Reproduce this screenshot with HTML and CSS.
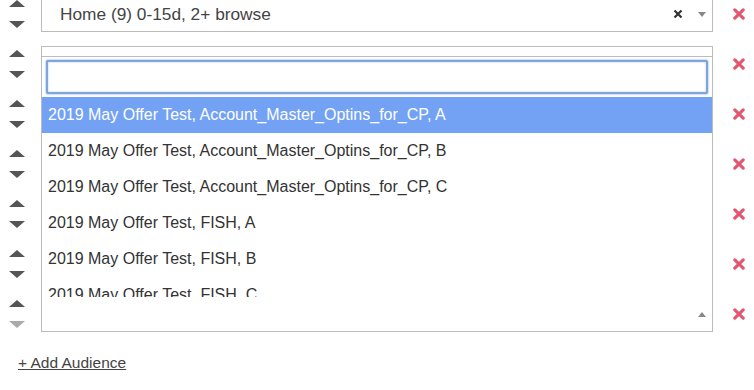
FILE: index.html
```html
<!DOCTYPE html>
<html lang="en">
  <head>
    <meta charset="UTF-8" />
    <title>Audiences</title>
    <link rel="stylesheet" href="styles.css">
  </head>
  <body>
    <div class="audience-list">
      <div class="audience-row">
        <div class="move-btns">
          <span class="arrow up"></span>
          <span class="arrow down"></span>
        </div>
        <div class="select-box">
          <span class="select-text">Home (9) 0-15d, 2+ browse</span>
          <span class="select-clear"><svg viewBox="0 0 10 10"><path d="M1.5 1.5 L8.5 8.5 M8.5 1.5 L1.5 8.5" /></svg></span>
          <span class="select-caret"></span>
        </div>
        <span class="remove-btn"><svg viewBox="0 0 10 10"><path d="M1.5 1.5 L8.5 8.5 M8.5 1.5 L1.5 8.5" /></svg></span>
      </div>

      <div class="audience-row">
        <div class="move-btns">
          <span class="arrow up"></span>
          <span class="arrow down"></span>
        </div>
        <div class="select-box"></div>
        <span class="remove-btn"><svg viewBox="0 0 10 10"><path d="M1.5 1.5 L8.5 8.5 M8.5 1.5 L1.5 8.5" /></svg></span>
      </div>

      <div class="audience-row">
        <div class="move-btns">
          <span class="arrow up"></span>
          <span class="arrow down"></span>
        </div>
        <div class="select-box"></div>
        <span class="remove-btn"><svg viewBox="0 0 10 10"><path d="M1.5 1.5 L8.5 8.5 M8.5 1.5 L1.5 8.5" /></svg></span>
      </div>

      <div class="audience-row">
        <div class="move-btns">
          <span class="arrow up"></span>
          <span class="arrow down"></span>
        </div>
        <div class="select-box"></div>
        <span class="remove-btn"><svg viewBox="0 0 10 10"><path d="M1.5 1.5 L8.5 8.5 M8.5 1.5 L1.5 8.5" /></svg></span>
      </div>

      <div class="audience-row">
        <div class="move-btns">
          <span class="arrow up"></span>
          <span class="arrow down"></span>
        </div>
        <div class="select-box"></div>
        <span class="remove-btn"><svg viewBox="0 0 10 10"><path d="M1.5 1.5 L8.5 8.5 M8.5 1.5 L1.5 8.5" /></svg></span>
      </div>

      <div class="audience-row">
        <div class="move-btns">
          <span class="arrow up"></span>
          <span class="arrow down"></span>
        </div>
        <div class="select-box"></div>
        <span class="remove-btn"><svg viewBox="0 0 10 10"><path d="M1.5 1.5 L8.5 8.5 M8.5 1.5 L1.5 8.5" /></svg></span>
      </div>

      <div class="audience-row">
        <div class="move-btns">
          <span class="arrow up"></span>
          <span class="arrow down disabled"></span>
        </div>
        <div class="select-box open">
          <span class="select-caret up"></span>
          <div class="dropdown">
            <div class="dropdown-search">
              <input type="text" />
            </div>
            <ul class="dropdown-results">
              <li class="highlighted">2019 May Offer Test, Account_Master_Optins_for_CP, A</li>
              <li>2019 May Offer Test, Account_Master_Optins_for_CP, B</li>
              <li>2019 May Offer Test, Account_Master_Optins_for_CP, C</li>
              <li>2019 May Offer Test, FISH, A</li>
              <li>2019 May Offer Test, FISH, B</li>
              <li>2019 May Offer Test, FISH, C</li>
              <li>2019 May Offer Test, FISH, D</li>
            </ul>
          </div>
        </div>
        <span class="remove-btn"><svg viewBox="0 0 10 10"><path d="M1.5 1.5 L8.5 8.5 M8.5 1.5 L1.5 8.5" /></svg></span>
      </div>
    </div>

    <a class="add-link" href="#">+ Add Audience</a>
  </body>
</html>
```

FILE: styles.css
```css
body {
  font-family: 'Liberation Sans', Arial, sans-serif;
  margin: 0;
  background: white;
  color: #333;
  overflow: hidden;
}

.audience-list {
  display: flex;
  flex-direction: column;
  gap: 14px;
  margin-top: -4px;
}

.audience-row {
  display: flex;
  align-items: center;
  height: 36px;
}

.move-btns {
  width: 41px;
  display: flex;
  flex-direction: column;
  align-items: center;
  gap: 14px;
  padding-right: 8px;
  padding-left: 1px;
  box-sizing: border-box;
  margin-top: -1px;
}

.arrow {
  width: 0;
  height: 0;
  border-left: 8px solid transparent;
  border-right: 8px solid transparent;
}

.arrow.up {
  border-bottom: 7px solid #555;
}

.arrow.down {
  border-top: 7px solid #555;
}

.arrow.down.disabled {
  border-top-color: #aaa;
}

.select-box {
  position: relative;
  flex: 0 0 672px;
  height: 36px;
  box-sizing: border-box;
  border: 1px solid #bbb;
  background: white;
  display: flex;
  align-items: center;
  padding-left: 18px;
}

.select-text {
  font-size: 17.3px;
  color: #444;
  flex: 1;
}

.select-clear {
  display: flex;
  width: 10px;
  height: 10px;
  margin-right: 15px;
}

.select-clear svg {
  width: 10px;
  height: 10px;
}

.select-clear path {
  stroke: #333;
  stroke-width: 2.2;
  fill: none;
}

.select-caret {
  width: 0;
  height: 0;
  border-left: 4px solid transparent;
  border-right: 4px solid transparent;
  border-top: 5px solid #888;
  margin-right: 6px;
}

.select-box.open {
  justify-content: flex-end;
}

.select-caret.up {
  border-top: none;
  border-bottom: 5px solid #888;
}

.dropdown {
  position: absolute;
  left: -1px;
  right: -1px;
  bottom: 100%;
  background: white;
  border: 1px solid #bbb;
  border-bottom: none;
  z-index: 5;
}

.dropdown-search {
  padding: 3px 4px 3px 4px;
}

.dropdown-search input {
  display: block;
  width: 100%;
  height: 34px;
  box-sizing: border-box;
  border: 2px solid #7fa5dc;
  border-radius: 2px;
  box-shadow: inset 0 0 2px #a8c4ec, 0 0 2px #5b8fd6;
  outline: none;
}

.dropdown-results {
  list-style: none;
  margin: 0;
  padding: 0;
  max-height: 200px;
  overflow: hidden;
}

.dropdown-results li {
  height: 36px;
  line-height: 36px;
  padding-left: 6px;
  font-size: 16px;
  color: #333;
  white-space: nowrap;
}

.dropdown-results li.highlighted {
  background: #73a2f5;
  color: white;
}

.remove-btn {
  width: 12px;
  height: 12px;
  margin-left: 20px;
  display: flex;
}

.remove-btn svg {
  width: 12px;
  height: 12px;
}

.remove-btn path {
  stroke: #e2566f;
  stroke-width: 2.6;
  stroke-linecap: round;
  fill: none;
}

.add-link {
  display: inline-block;
  margin: 22px 0 0 18px;
  font-size: 15.5px;
  color: #444;
  text-decoration: underline;
}
```
